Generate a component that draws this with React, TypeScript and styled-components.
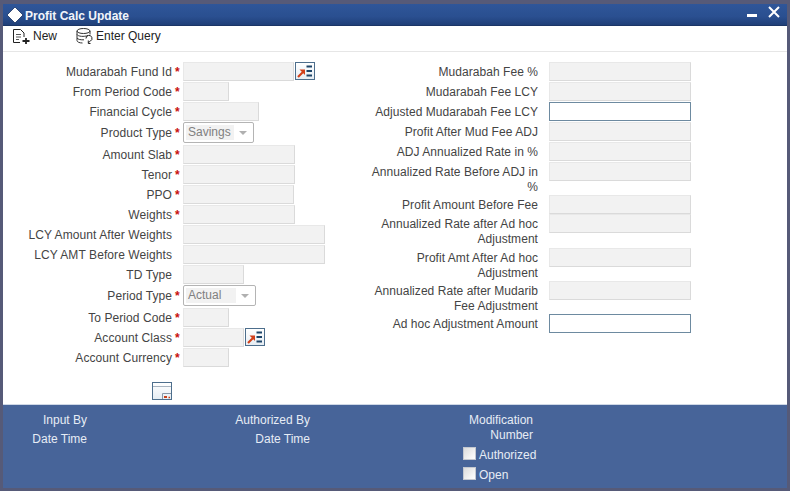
import React from "react";
import styled, { createGlobalStyle } from "styled-components";

const Global = createGlobalStyle`
  html, body { margin: 0; padding: 0; background: #565a78; }
  #root { width: 790px; height: 491px; overflow: hidden; }
  * { box-sizing: border-box; }
`;

const Win = styled.div`
  width: 790px;
  height: 491px;
  padding: 4px 3px 3px 3px;
  background: #565a78;
  display: flex;
  flex-direction: column;
  font-family: "Liberation Sans", Arial, sans-serif;
  font-size: 12px;
  color: #444;
`;

const TitleBar = styled.div`
  height: 22px;
  flex: none;
  background: linear-gradient(#2f5699, #2a4f90 60%, #1f3f78);
  border-bottom: 1px solid #1b3566;
  display: flex;
  align-items: center;
  padding-left: 3px;
  color: #f2f5fa;
  font-weight: bold;
  font-size: 12px;
`;

const TitleText = styled.span`
  margin-left: 1px;
  padding-top: 2px;
  flex: 1;
`;

const WinButtons = styled.div`
  display: flex;
  align-items: flex-start;
  gap: 11px;
  padding-right: 7px;
  height: 100%;
`;

const Toolbar = styled.div`
  height: 26px;
  flex: none;
  background: #fff;
  border-bottom: 1px solid #e6e6e6;
  display: flex;
  align-items: center;
  padding: 0 0 5px 10px;
  color: #222;
`;

const ToolItem = styled.div<{ $w: number }>`
  display: flex;
  align-items: center;
  gap: 2px;
  width: ${(p) => p.$w}px;
`;

const Body = styled.div`
  flex: 1;
  background: #fff;
  display: flex;
  padding-top: 10px;
  min-height: 0;
`;

const LeftCol = styled.div`
  width: 346px;
  flex: none;
  display: flex;
  flex-direction: column;
`;

const RightCol = styled.div`
  flex: 1;
  display: flex;
  flex-direction: column;
`;

const Row = styled.div<{ $h?: number }>`
  display: flex;
  flex: none;
  height: ${(p) => p.$h ?? 20}px;
  align-items: flex-start;
`;

const LeftLabel = styled.label<{ $lh?: number }>`
  width: 169px;
  text-align: right;
  white-space: nowrap;
  letter-spacing: 0.08px;
  line-height: ${(p) => p.$lh ?? 20}px;
  flex: none;
  color: #444;
`;

const Star = styled.span<{ $lh?: number }>`
  width: 11px;
  flex: none;
  padding-left: 3px;
  line-height: ${(p) => p.$lh ?? 20}px;
  color: #c81010;
  font-weight: bold;
`;

const Field = styled.div<{ $w: number; $white?: boolean }>`
  width: ${(p) => p.$w}px;
  height: 19px;
  flex: none;
  background: ${(p) => (p.$white ? "#fff" : "#f2f2f2")};
  border: 1px solid ${(p) => (p.$white ? "#6d8aa0" : "#e8e8e8")};
  border-right-color: ${(p) => (p.$white ? "#6d8aa0" : "#dadada")};
  border-bottom-color: ${(p) => (p.$white ? "#6d8aa0" : "#dadada")};
`;

const Select = styled.div<{ $w: number }>`
  width: ${(p) => p.$w}px;
  height: 21px;
  flex: none;
  border: 1px solid #b4b4b4;
  border-radius: 2px;
  background: #fff;
  display: flex;
  align-items: center;
  padding: 0 2px;
  color: #808080;
`;

const SelectValue = styled.span`
  background: #f2f2f2;
  flex: 1;
  height: 15px;
  line-height: 15px;
  padding-left: 2px;
  margin-right: 5px;
`;

const Caret = styled.span`
  width: 0;
  height: 0;
  flex: none;
  margin-right: 4px;
  border-left: 4px solid transparent;
  border-right: 4px solid transparent;
  border-top: 4px solid #b0b0b0;
`;

const IconBtn = styled.button<{ $w?: number }>`
  width: ${(p) => p.$w ?? 20}px;
  height: 18px;
  padding: 0;
  flex: none;
  margin-left: 1px;
  border: 1px solid #4d6e8c;
  background: linear-gradient(#fff, #e6edf3);
  display: flex;
  align-items: center;
  justify-content: center;
`;

const PopupWrap = styled.div`
  padding: 14px 0 0 148px;
`;

const RightLabel = styled.label`
  width: 169px;
  margin-left: 20px;
  margin-right: 11px;
  flex: none;
  text-align: right;
  line-height: 15px;
  padding-top: 3px;
  letter-spacing: 0.05px;
  color: #444;
`;

const Footer = styled.div`
  height: 84px;
  flex: none;
  background: #476499;
  border-top: 1px solid #cfd8e6;
  display: flex;
  color: #e6ecf5;
`;

const FootCol = styled.div<{ $w: number }>`
  width: ${(p) => p.$w}px;
  flex: none;
  text-align: right;
  padding-top: 6px;
  line-height: 19px;
`;

const ModCol = styled(FootCol)`
  line-height: 15px;
  padding-top: 8px;
`;

const ChecksCol = styled.div`
  display: flex;
  flex-direction: column;
  margin-left: -70px;
  padding-top: 42px;
  gap: 7px;
`;

const CheckRow = styled.div`
  display: flex;
  align-items: center;
  gap: 3px;
  height: 13px;
`;

const CheckLabel = styled.span`
  padding-top: 2px;
`;

const Box = styled.span`
  width: 13px;
  height: 13px;
  flex: none;
  background: linear-gradient(135deg, #dcdcdc, #fff);
  border: 1px solid #c4c8d0;
`;

const Diamond = () => (
  <svg width="18" height="18" viewBox="0 0 18 18">
    <path d="M9 1 L17 9 L9 17 L1 9 Z" fill="#fff" stroke="#17305f" strokeWidth="0.8" />
  </svg>
);

const NewIcon = () => (
  <svg width="18" height="17" viewBox="0 0 18 17" fill="none" stroke="#222">
    <path d="M0.5 1.5 H7.5 L11 5 V9 M0.5 1.5 V14.5 H7" />
    <path d="M3 6.5 H8 M3 9 H8 M3 11.5 H6" stroke="#555" />
    <path d="M13 10 V16 M9.5 13 H16.5" strokeWidth="1.8" />
  </svg>
);

const QueryIcon = () => (
  <svg width="18" height="17" viewBox="0 0 18 17" fill="none" stroke="#333">
    <ellipse cx="7.5" cy="3" rx="6.5" ry="2.5" />
    <path d="M1 3 V12.5 C1 14 3.5 15 6.5 15 M14 3 V6.5 M1 6.5 C2 8.5 8 9 12 7.5 M1 10 C2 11.5 5 12 8 11.8" />
    <path d="M10 10.5 A3 3 0 1 1 14.5 13 L12.5 14.5 M12.3 12.5 V15.5 H14.5" stroke="#222" />
  </svg>
);

const LookupIcon = () => (
  <svg width="18" height="14" viewBox="0 0 18 14" fill="none">
    <path d="M2 13 L7.5 7.5" stroke="#d2401a" strokeWidth="2.2" />
    <path d="M3.5 5.5 H9 V11 Z" fill="#d2401a" />
    <path d="M10.5 2.5 H16 M10.5 7 H16 M10.5 11.5 H16" stroke="#1d4468" strokeWidth="1.8" />
  </svg>
);

const PopupIcon = () => (
  <svg width="18" height="16" viewBox="0 0 18 16" fill="none">
    <path d="M0 3.5 H18" stroke="#a8b4c0" />
    <path d="M9.5 16 V10.5 H18" stroke="#8a98a8" />
    <path d="M11 14 H14" stroke="#c8401a" strokeWidth="2" />
    <path d="M15.5 14.5 H17" stroke="#c8401a" strokeWidth="1.5" />
  </svg>
);

const LeftRow = ({ label, star = true, h, lh, children }: { label: string; star?: boolean; h?: number; lh?: number; children: React.ReactNode }) => (
  <Row $h={h}>
    <LeftLabel $lh={lh}>{label}</LeftLabel>
    <Star $lh={lh}>{star ? "*" : ""}</Star>
    {children}
  </Row>
);

const RightRow = ({ label, h, white }: { label: string; h?: number; white?: boolean }) => (
  <Row $h={h}>
    <RightLabel>{label}</RightLabel>
    <Field $w={142} $white={white} />
  </Row>
);

export default function App() {
  return (
    <Win>
      <Global />
      <TitleBar>
        <Diamond />
        <TitleText>Profit Calc Update</TitleText>
        <WinButtons>
          <svg width="10" height="16" viewBox="0 0 10 16">
            <rect x="0" y="10" width="10" height="3" fill="#fff" />
          </svg>
          <svg width="12" height="14" viewBox="0 0 12 14">
            <path d="M1 3 L11 13 M11 3 L1 13" stroke="#fff" strokeWidth="2" />
          </svg>
        </WinButtons>
      </TitleBar>
      <Toolbar>
        <ToolItem $w={63}>
          <NewIcon />
          <span>New</span>
        </ToolItem>
        <ToolItem $w={100}>
          <QueryIcon />
          <span>Enter Query</span>
        </ToolItem>
      </Toolbar>
      <Body>
        <LeftCol>
          <LeftRow label="Mudarabah Fund Id">
            <Field $w={111} />
            <IconBtn><LookupIcon /></IconBtn>
          </LeftRow>
          <LeftRow label="From Period Code"><Field $w={46} /></LeftRow>
          <LeftRow label="Financial Cycle"><Field $w={76} /></LeftRow>
          <LeftRow label="Product Type" h={23} lh={22}>
            <Select $w={71}><SelectValue>Savings</SelectValue><Caret /></Select>
          </LeftRow>
          <LeftRow label="Amount Slab"><Field $w={112} /></LeftRow>
          <LeftRow label="Tenor"><Field $w={112} /></LeftRow>
          <LeftRow label="PPO"><Field $w={111} /></LeftRow>
          <LeftRow label="Weights"><Field $w={112} /></LeftRow>
          <LeftRow label="LCY Amount After Weights" star={false}><Field $w={142} /></LeftRow>
          <LeftRow label="LCY AMT Before Weights" star={false}><Field $w={142} /></LeftRow>
          <LeftRow label="TD Type" star={false}><Field $w={61} /></LeftRow>
          <LeftRow label="Period Type" h={23} lh={22}>
            <Select $w={73}><SelectValue>Actual</SelectValue><Caret /></Select>
          </LeftRow>
          <LeftRow label="To Period Code"><Field $w={46} /></LeftRow>
          <LeftRow label="Account Class">
            <Field $w={61} />
            <IconBtn><LookupIcon /></IconBtn>
          </LeftRow>
          <LeftRow label="Account Currency"><Field $w={46} /></LeftRow>
          <PopupWrap>
            <IconBtn $w={20}><PopupIcon /></IconBtn>
          </PopupWrap>
        </LeftCol>
        <RightCol>
          <RightRow label="Mudarabah Fee %" />
          <RightRow label="Mudarabah Fee LCY" />
          <RightRow label="Adjusted Mudarabah Fee LCY" white />
          <RightRow label="Profit After Mud Fee ADJ" />
          <RightRow label="ADJ Annualized Rate in %" />
          <RightRow label="Annualized Rate Before ADJ in %" h={33} />
          <RightRow label="Profit Amount Before Fee" h={19} />
          <RightRow label="Annualized Rate after Ad hoc Adjustment" h={34} />
          <RightRow label="Profit Amt After Ad hoc Adjustment" h={33} />
          <RightRow label="Annualized Rate after Mudarib Fee Adjustment" h={33} />
          <RightRow label="Ad hoc Adjustment Amount" white />
        </RightCol>
      </Body>
      <Footer>
        <FootCol $w={84}>Input By<br />Date Time</FootCol>
        <FootCol $w={223}>Authorized By<br />Date Time</FootCol>
        <ModCol $w={223}>Modification<br />Number</ModCol>
        <ChecksCol>
          <CheckRow><Box /><CheckLabel>Authorized</CheckLabel></CheckRow>
          <CheckRow><Box /><CheckLabel>Open</CheckLabel></CheckRow>
        </ChecksCol>
      </Footer>
    </Win>
  );
}
